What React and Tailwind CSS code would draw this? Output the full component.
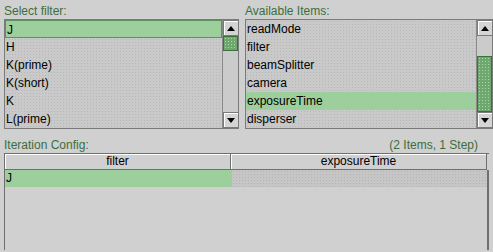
const filters = ["J", "H", "K(prime)", "K(short)", "K", "L(prime)"];
const items = ["readMode", "filter", "beamSplitter", "camera", "exposureTime", "disperser"];

function ArrowButton({ up }) {
  return (
    <div className="h-[16px] w-[16px] shrink-0 border border-[#7a7a7a] bg-[#d4d4d4] shadow-[inset_1px_1px_0_#ffffff] flex items-center justify-center">
      <svg width="8" height="5" viewBox="0 0 8 5">
        {up ? <path d="M0 5 L4 0 L8 5 Z" fill="#000" /> : <path d="M0 0 L4 5 L8 0 Z" fill="#000" />}
      </svg>
    </div>
  );
}

function ScrollBar({ gap, thumb }) {
  return (
    <div className="w-[16px] flex flex-col border-l border-[#8a8a8a]">
      <ArrowButton up />
      <div className="flex-1 flex flex-col bg-[#cbcbcb]">
        <div style={{ height: gap }} />
        <div
          style={{ height: thumb }}
          className="border border-[#3f6f3f] bg-[#6ea86e] bg-[radial-gradient(#a8d6a8_0.8px,transparent_0.8px)] bg-size-[3px_3px]"
        />
      </div>
      <ArrowButton />
    </div>
  );
}

function ListBox({ rows, selected, focused, gap, thumb, width }) {
  return (
    <div
      style={{ width }}
      className="h-[110px] flex border border-[#7a7a7a] bg-[#c9c9c9] bg-[radial-gradient(#b8b8b8_0.7px,transparent_0.7px)] bg-size-[3px_3px]"
    >
      <div className="flex-1 flex flex-col">
        {rows.map((r, i) => (
          <div
            key={r}
            className={`h-[18px] leading-[18px] px-[1px] ${
              i === selected ? "bg-[#9dcf9c]" : ""
            } ${i === selected && focused ? "border border-[#5e8f5e] leading-[16px]" : ""}`}
          >
            {r}
          </div>
        ))}
      </div>
      <ScrollBar gap={gap} thumb={thumb} />
    </div>
  );
}

export default function App() {
  return (
    <div
      className="w-[493px] h-[252px] overflow-hidden bg-[#d0d0d0] text-[12px] text-black pt-[3px] pl-[4px] pr-[2px]"
      style={{ fontFamily: '"Liberation Sans", Arial, sans-serif' }}
    >
      {/* top lists */}
      <div className="flex gap-[6px]">
        <div className="flex flex-col">
          <div className="h-[16px] leading-[16px] text-[#3c6e3c]">Select filter:</div>
          <ListBox rows={filters} selected={0} focused gap={0} thumb={15} width={235} />
        </div>
        <div className="flex flex-col">
          <div className="h-[16px] leading-[16px] text-[#3c6e3c]">Available Items:</div>
          <ListBox rows={items} selected={4} gap={20} thumb={56} width={248} />
        </div>
      </div>

      {/* iteration config */}
      <div className="mt-[8px] flex justify-between h-[16px] leading-[16px] text-[#3c6e3c]">
        <span>Iteration Config:</span>
        <span className="mr-[13px]">(2 Items, 1 Step)</span>
      </div>
      <div className="h-[97px] w-[485px] border-l border-t border-[#6f6f6f] flex flex-col">
        <div className="flex h-[16px]">
          <div className="w-[226px] border-r border-b border-[#6f6f6f] shadow-[inset_1px_1px_0_#ffffff] bg-[#d0d0d0] text-center leading-[14px]">
            filter
          </div>
          <div className="w-[256px] border-r border-b border-[#6f6f6f] shadow-[inset_1px_1px_0_#ffffff] bg-[#d0d0d0] text-center leading-[14px]">
            exposureTime
          </div>
        </div>
        <div className="flex h-[17px]">
          <div className="w-[227px] bg-[#9dcf9c] leading-[17px] px-[1px]">J</div>
          <div className="w-[255px] bg-[#c6c6c6] bg-[radial-gradient(#b2b2b2_0.7px,transparent_0.7px)] bg-size-[3px_3px]" />
          <div className="w-[2px] bg-[#6f6f6f]" />
        </div>
        <div className="flex-1 flex justify-end">
          <div className="w-[2px] bg-[#6f6f6f]" />
        </div>
      </div>
    </div>
  );
}
